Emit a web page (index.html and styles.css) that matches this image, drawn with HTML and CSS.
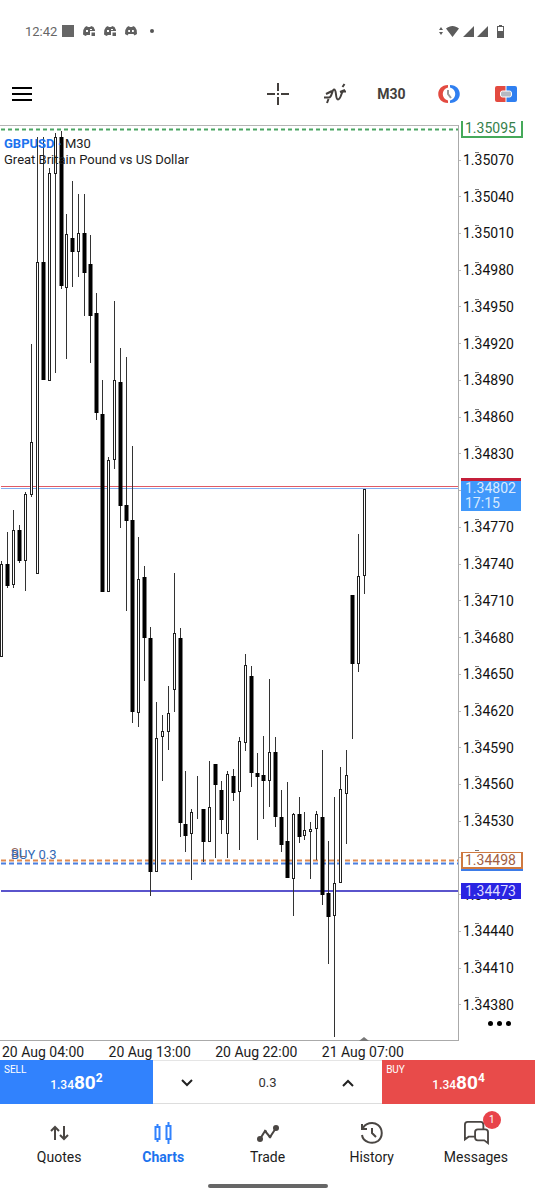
FILE: index.html
```html
<!DOCTYPE html>
<html lang="en">
<head>
    <meta charset="UTF-8">
    <meta name="viewport" content="width=device-width, initial-scale=1.0">
    <title>GBPUSD M30</title>
    <link rel="stylesheet" href="styles.css">
</head>
<body>
    <!-- Status bar -->
    <div class="status-bar">
        <span class="clock">12:42</span>
        <span class="square"></span>
        <svg class="chat-icon" viewBox="0 0 14 12"><path d="M3 2 5 1l.7 1h2.600L9 1l2.500 1L13 5v1H8v4H5L3.500 11 1 9.500 1.300 5z"/><path class="cut" d="M4 5h2v2H4zM8 4h2v1H8z"/><path d="M9.500 7.500H13V11H9.500z"/></svg>
        <svg class="chat-icon" viewBox="0 0 14 12"><path d="M3 2 5 1l.7 1h2.600L9 1l2.500 1L13 5v1H8v4H5L3.500 11 1 9.500 1.300 5z"/><path class="cut" d="M4 5h2v2H4zM8 4h2v1H8z"/><path d="M9.500 7.500H13V11H9.500z"/></svg>
        <svg class="chat-icon" viewBox="0 0 14 12"><path d="M3 2 5 1l.7 1h2.600L9 1l2 1L12.700 5l.3 4L10.500 10.500 9.500 9h-5L3.500 10.500 1 9 1.300 5z"/><path class="cut" d="M4.200 5h1.800v2H4.200zM8 5h1.800v2H8z"/></svg>
        <span class="dot"></span>
        <svg class="signal-icons" viewBox="0 0 66 14">
            <path d="M0 6l2-3 2 3zM0 8h4l-2 3zM7 4.500C11 1 16 1 20 4.500L13.500 13zM35 13V2L24 13zM49 13V2L38 13z"/>
            <path fill-rule="evenodd" d="M60 1h3v1h2v12h-7V2h2zM59 3v4h5V3z"/>
        </svg>
    </div>

    <!-- Toolbar -->
    <header class="toolbar">
        <button class="menu" aria-label="Menu">
            <svg viewBox="0 0 20 14"><path d="M0 1h20M0 7h20M0 13h20"/></svg>
        </button>
        <button aria-label="Crosshair">
            <svg viewBox="0 0 24 24"><path d="M12 1v8M12 15v8M1 12h8M15 12h8M11 12h2"/></svg>
        </button>
        <button aria-label="Indicators">
            <svg viewBox="0 0 24 24"><path d="M1 15.500h5c3 0 3-8 5-8 3 0 1 10 4 10s3-7 5-8h3M4 21l1.500-4M3 12l6-3M17 10l5-2M19.500 5l2-3"/></svg>
        </button>
        <button class="period">M30</button>
        <button aria-label="Order types">
            <svg class="color-icon" viewBox="0 0 24 24">
                <path class="red" d="M11 3C-2 3-2 21 11 21V18.500C4 17 4 7 11 5.500z"/>
                <path class="blue" d="M13 3C26 3 26 21 13 21V18.500C20 17 20 7 13 5.500z"/>
                <path class="hand" d="M11 8v4l3 4"/>
            </svg>
        </button>
        <button aria-label="One click trading">
            <svg class="color-icon" viewBox="0 0 24 24">
                <path class="red" d="M3 4h8.500v16H3q-2 0-2-2V6q0-2 2-2z"/>
                <path class="blue" d="M12.500 4H21q2 0 2 2v12q0 2-2 2h-8.500z"/>
                <rect class="pill" x="6.500" y="9" width="11" height="6" rx="2"/>
            </svg>
        </button>
    </header>

    <!-- Chart -->
    <main class="chart">
        <div class="plot">
            <svg class="candles" id="candles" viewBox="0 125 458 916" preserveAspectRatio="none">
                <path class="line green" d="M1 129.500H458"/>
                <path class="line bid" d="M1 488.500H458"/>
                <path class="line ask" d="M1 486.500H458"/>
                <path class="line orange" d="M1 860.500H458"/>
                <path class="line blue-dash" d="M1 863.500H458"/>
                <path class="line indigo" d="M1 891H458"/>
                <path class="marker" d="M359 1041l5-4 5 4z"/>
            </svg>
            <p class="symbol"><a href="#">GBPUSD ·</a> M30</p>
            <p class="symbol-name">Great Britain Pound vs US Dollar</p>
            <span class="note sl" data-price="1.34504">SL</span>
            <span class="note buy" data-price="1.34502">BUY 0.3</span>
        </div>
        <div class="scale">
            <ul class="prices">
                <li>1.35070</li>
                <li>1.35040</li>
                <li>1.35010</li>
                <li>1.34980</li>
                <li>1.34950</li>
                <li>1.34920</li>
                <li>1.34890</li>
                <li>1.34860</li>
                <li>1.34830</li>
                <li></li>
                <li>1.34770</li>
                <li>1.34740</li>
                <li>1.34710</li>
                <li>1.34680</li>
                <li>1.34650</li>
                <li>1.34620</li>
                <li>1.34590</li>
                <li>1.34560</li>
                <li>1.34530</li>
                <li></li>
                <li>1.34470</li>
                <li>1.34440</li>
                <li>1.34410</li>
                <li>1.34380</li>
            </ul>
            <span class="tag tag-high" data-price="1.35095">1.35095</span>
            <span class="tag tag-bid" data-price="1.34802">1.34802<br>17:15</span>
            <span class="tag tag-stop" data-price="1.34498">1.34498</span>
            <span class="tag tag-line" data-price="1.34473">1.34473</span>
            <button class="more" aria-label="More"><i></i><i></i><i></i></button>
        </div>
    </main>
    <div class="times">
        <span>20 Aug 04:00</span>
        <span>20 Aug 13:00</span>
        <span>20 Aug 22:00</span>
        <span>21 Aug 07:00</span>
    </div>

    <!-- One click trading -->
    <section class="trade">
        <button class="side sell">
            <span class="side-name">SELL</span>
            <span class="quote">1.34<b>80</b><sup>2</sup></span>
        </button>
        <div class="volume">
            <button aria-label="Less"><svg viewBox="0 0 12 8"><path d="M1 1l5 5 5-5"/></svg></button>
            <input type="text" value="0.3" aria-label="Volume">
            <button aria-label="More volume"><svg viewBox="0 0 12 8"><path d="M1 7l5-5 5 5"/></svg></button>
        </div>
        <button class="side buy-side">
            <span class="side-name">BUY</span>
            <span class="quote">1.34<b>80</b><sup>4</sup></span>
        </button>
    </section>

    <!-- Bottom tabs -->
    <nav class="tabs">
        <a href="#">
            <svg viewBox="0 0 24 24"><path d="M8 19V6M4 10l4-4 4 4M17 5v13M13 14l4 4 4-4"/></svg>
            Quotes
        </a>
        <a href="#" class="active">
            <svg viewBox="0 0 24 24"><path d="M4.500 6h4v12h-4zM6.500 3v3M6.500 18v3M15.500 5h4v13h-4zM17.500 1v4M17.500 18v5"/></svg>
            Charts
        </a>
        <a href="#">
            <svg viewBox="0 0 24 24"><path d="M4 18l5-8 5 6 6-9"/><circle cx="4" cy="18" r="3"/><circle cx="9.500" cy="10.500" r="1.500"/><circle cx="14" cy="15.500" r="1.500"/><circle cx="20" cy="7" r="3"/></svg>
            Trade
        </a>
        <a href="#">
            <svg viewBox="0 0 24 24"><path d="M2 3v5h5M2.500 8C5 2 13 0 18 4c5 4 5 12 0 16-6 4-15 1-16-6M12 7v5l4 4"/></svg>
            History
        </a>
        <a href="#">
            <span class="badge">1</span>
            <svg class="wide" viewBox="0 0 28 26"><path d="M12 17H6l-4 3V4q0-3 3-3h14q3 0 3 3v4M16 9h8q3 0 3 3v12l-4-3h-7q-3 0-3-3v-6q0-3 3-3z"/></svg>
            Messages
        </a>
    </nav>
    <div class="home-bar"></div>

    <script src="chart.js"></script>
</body>
</html>
```

FILE: styles.css
```css
* {
    margin: 0;
    padding: 0;
    box-sizing: border-box;
    font-family: Roboto, "Liberation Sans", sans-serif;
}

body {
    display: flex;
    flex-direction: column;
    min-height: 100vh;
    background-color: #fff;
    color: #1c1c1c;
}

button {
    border: none;
    background: none;
    cursor: pointer;
}

a {
    color: inherit;
    text-decoration: none;
}

svg {
    fill: none;
}

/* Status bar */
.status-bar {
    display: flex;
    align-items: center;
    height: 62px;
    padding: 0 30px 0 25px;
    color: #666;
    font-size: 13px;
}

.square {
    width: 12px;
    height: 12px;
    margin: 0 8px 0 5px;
    background-color: #666;
}

.chat-icon {
    width: 14px;
    height: 12px;
    margin-right: 7px;
    fill: #606060;
}

.chat-icon .cut {
    fill: #fff;
}

.dot {
    width: 4px;
    height: 4px;
    margin-left: 5px;
    border-radius: 50%;
    background-color: #555;
}

.signal-icons {
    width: 66px;
    height: 14px;
    margin-left: auto;
    fill: #5c5c5c;
}

/* Toolbar */
.toolbar {
    display: flex;
    align-items: center;
    height: 63px;
    padding: 0 1px 0 12px;
}

.toolbar button {
    width: 57px;
    height: 40px;
}

.toolbar svg {
    width: 24px;
    height: 24px;
    stroke: #433f3c;
    stroke-width: 2;
    vertical-align: middle;
}

.toolbar .menu {
    width: 20px;
    margin-right: auto;
}

.toolbar .menu svg {
    width: 20px;
    height: 14px;
    stroke: #000;
}

.toolbar .period {
    font-size: 14px;
    font-weight: bold;
    color: #433f3c;
}

.toolbar .color-icon {
    stroke: none;
}

.red {
    fill: #e34a40;
}

.blue {
    fill: #2f7ff0;
}

.hand {
    stroke: #999;
}

.pill {
    fill: #b5b9c2;
    stroke: #fff;
    stroke-width: 1;
}

/* Chart */
.chart {
    display: flex;
    flex: 1;
    min-height: 600px;
}

.plot {
    position: relative;
    flex: 1;
    border-top: 1px solid #b5b5b5;
    border-right: 1px solid #aaa;
    border-bottom: 1px solid #aaa;
    font-size: 13px;
    line-height: 16px;
    padding: 10px 4px;
}

.candles {
    position: absolute;
    inset: -1px 0;
    width: 100%;
    height: calc(100% + 2px);
}

.symbol, .symbol-name {
    position: relative;
}

.symbol a {
    color: #1c73ee;
    font-weight: bold;
}

.line {
    stroke-width: 1;
}

.green {
    stroke: #4aa563;
    stroke-width: 2;
    stroke-dasharray: 4 3;
}

.bid {
    stroke: #85aef0;
}

.ask {
    stroke: #e05a64;
}

.orange {
    stroke: #dd8a50;
    stroke-width: 2;
    stroke-dasharray: 5 3;
}

.blue-dash {
    stroke: #4a7fe0;
    stroke-width: 2;
    stroke-dasharray: 5 3;
}

.indigo {
    stroke: #5a54cc;
    stroke-width: 2;
}

.marker {
    fill: #777;
}

.wick {
    stroke: #333;
}

.body {
    fill: #fff;
    stroke: #222;
}

.body.down {
    fill: #000;
    stroke: #000;
}

.note {
    position: absolute;
    left: 11px;
    margin-top: -8px;
}

.sl {
    color: #93685c;
}

.buy {
    color: #3268b5;
}

.scale {
    position: relative;
    width: 76px;
    font-size: 14px;
    line-height: 16px;
}

.prices {
    display: flex;
    flex-direction: column;
    justify-content: space-between;
    height: 100%;
    padding: 27px 0 28px;
    list-style: none;
    color: #111;
}

.prices li {
    position: relative;
    display: flex;
    align-items: center;
    gap: 2px;
    height: 16px;
}

.prices li::before {
    content: "";
    width: 2px;
    height: 1px;
    background-color: #bbb;
}

.prices li::after {
    content: "";
    position: absolute;
    top: 0;
    left: 16px;
    width: 4px;
    height: 1px;
    background-color: #777;
}

.tag {
    position: absolute;
    left: 2px;
    width: 60px;
    margin-top: -8px;
    padding-left: 4px;
    color: #fff;
}

.tag-high {
    width: 62px;
    padding-left: 2px;
    border: 2px solid #45a95a;
    border-top: none;
    background-color: #fff;
    color: #35804a;
    line-height: 15px;
}

.tag-bid {
    border-top: 3px solid #c41f3a;
    margin-top: -10px;
    background-color: #4098fb;
    color: #d8eaff;
    line-height: 15px;
}

.tag-stop {
    width: 62px;
    padding-left: 2px;
    border: 2px solid #cf7940;
    border-top-width: 1px;
    background-color: #fff;
    box-shadow: 0 2px #3d7ce8;
    color: #a25e43;
    line-height: 14px;
}

.tag-line {
    background-color: #2a24e2;
    color: #dedcff;
}

.more {
    position: absolute;
    right: 24px;
    bottom: 10px;
    display: flex;
    gap: 4px;
    padding: 5px 0;
}

.more i {
    width: 5px;
    height: 5px;
    border-radius: 50%;
    background-color: #000;
}

.times {
    display: grid;
    grid-template-columns: repeat(5, 20%);
    height: 19px;
    padding-left: 2px;
    font-size: 14px;
    line-height: 23px;
    white-space: nowrap;
    overflow: hidden;
}

/* One click trading */
.trade {
    display: grid;
    grid-template-columns: minmax(0, 2fr) minmax(0, 3fr) minmax(0, 2fr);
    height: 44px;
}

.side {
    position: relative;
    color: #fff;
}

.sell {
    background-color: #3182fd;
}

.buy-side {
    background-color: #e84b4a;
}

.side-name {
    position: absolute;
    top: 4px;
    left: 4px;
    font-size: 10px;
}

.quote {
    font-size: 12px;
    font-weight: 500;
}

.quote b {
    font-size: 19px;
}

.quote sup {
    font-size: 12px;
    font-weight: bold;
    line-height: 1px;
    vertical-align: 7px;
}

.volume {
    display: flex;
    border-top: 1px solid #e5e5e5;
    border-bottom: 1px solid #ddd;
}

.volume button {
    width: 68px;
}

.volume svg {
    width: 12px;
    height: 8px;
    stroke: #222;
    stroke-width: 2;
}

.volume input {
    flex: 1;
    min-width: 0;
    border: none;
    font-size: 13px;
    color: #333;
    text-align: center;
}

/* Bottom tabs */
.tabs {
    display: flex;
    height: 78px;
    padding: 17px 7px 0;
    font-size: 14px;
    line-height: 16px;
}

.tabs a {
    position: relative;
    display: flex;
    flex: 1;
    flex-direction: column;
    align-items: center;
    gap: 4px;
}

.tabs svg {
    width: 24px;
    height: 24px;
    stroke: #4a4643;
    stroke-width: 2;
}

.tabs svg.wide {
    width: 28px;
}

.tabs circle {
    fill: #4a4643;
    stroke: none;
}

.tabs .active {
    color: #1c73ee;
    font-weight: bold;
}

.tabs .active svg {
    stroke: #3182fd;
}

.badge {
    position: absolute;
    top: -10px;
    left: calc(50% + 7px);
    width: 18px;
    height: 18px;
    border-radius: 50%;
    background-color: #e8434a;
    color: #fff;
    font-size: 10px;
    line-height: 18px;
    text-align: center;
    z-index: 1;
}

.home-bar {
    width: 120px;
    height: 4px;
    margin: 2px auto 12px;
    border-radius: 2px;
    background-color: #666;
}
```

FILE: chart.js
```javascript
// wick top, body top, body bottom, wick bottom, 1 = down candle
const candles = [
    [561, 564, 657, 657, 0], [532, 564, 586, 588, 1], [510, 530, 585, 588, 0], [525, 530, 561, 563, 1],
    [492, 494, 561, 591, 0], [344, 442, 495, 497, 0], [137, 262, 574, 574, 0], [137, 262, 380, 380, 1],
    [168, 173, 381, 381, 0], [133, 137, 174, 373, 0], [131, 137, 286, 289, 1], [214, 234, 288, 359, 0],
    [181, 238, 252, 287, 1], [194, 233, 252, 277, 0], [194, 233, 273, 316, 1], [235, 264, 316, 363, 1],
    [293, 313, 413, 420, 1], [380, 414, 592, 592, 1], [457, 460, 592, 592, 0], [301, 380, 460, 469, 0],
    [348, 382, 506, 528, 1], [357, 505, 521, 611, 1], [446, 520, 712, 723, 1], [537, 579, 713, 727, 0],
    [566, 577, 638, 681, 1], [627, 638, 872, 896, 1], [702, 738, 872, 872, 0], [715, 731, 737, 781, 0],
    [686, 713, 732, 750, 0], [573, 633, 690, 712, 0], [628, 638, 823, 837, 1], [771, 824, 836, 852, 1],
    [809, 812, 834, 880, 0], [776, 811, 811, 819, 1], [809, 809, 842, 862, 1], [761, 807, 842, 842, 0],
    [764, 764, 785, 858, 1], [781, 790, 820, 834, 1], [771, 774, 834, 858, 0], [769, 776, 793, 801, 1],
    [737, 741, 792, 850, 0], [654, 665, 743, 751, 0], [666, 676, 773, 787, 1], [753, 773, 777, 840, 1],
    [736, 775, 781, 819, 1], [679, 752, 781, 807, 0], [737, 752, 817, 827, 1], [790, 817, 845, 852, 1],
    [782, 841, 878, 878, 1], [813, 814, 879, 916, 0], [797, 814, 837, 843, 1], [812, 830, 836, 840, 0],
    [822, 829, 832, 879, 0], [811, 814, 829, 860, 0], [750, 817, 895, 905, 1], [841, 893, 917, 964, 1],
    [797, 883, 916, 1037, 0], [767, 789, 883, 883, 0], [750, 775, 794, 844, 0], [595, 595, 664, 739, 1],
    [534, 576, 664, 672, 0], [489, 489, 576, 594, 0]
];

const svg = document.getElementById('candles');

function draw(name, attrs) {
    const el = document.createElementNS('http://www.w3.org/2000/svg', name);
    for (const key in attrs) {
        el.setAttribute(key, attrs[key]);
    }
    svg.appendChild(el);
}

candles.forEach(([high, top, bottom, low, down], i) => {
    const x = Math.round(1 + i * 5.95) + 0.5;
    draw('path', { class: 'wick', d: `M${x} ${high}V${low}` });
    draw('rect', {
        class: down ? 'body down' : 'body',
        x: down ? x - 1.5 : x - 1,
        y: top + 0.5,
        width: down ? 3 : 2,
        height: Math.max(bottom - top - 1, 0)
    });
});

// place everything that hangs on a price
document.querySelectorAll('[data-price]').forEach(el => {
    const y = 34.6 + (1.3507 - el.dataset.price) / 0.0003 * 36.76;
    el.style.top = (y / 916 * 100) + '%';
});
```
